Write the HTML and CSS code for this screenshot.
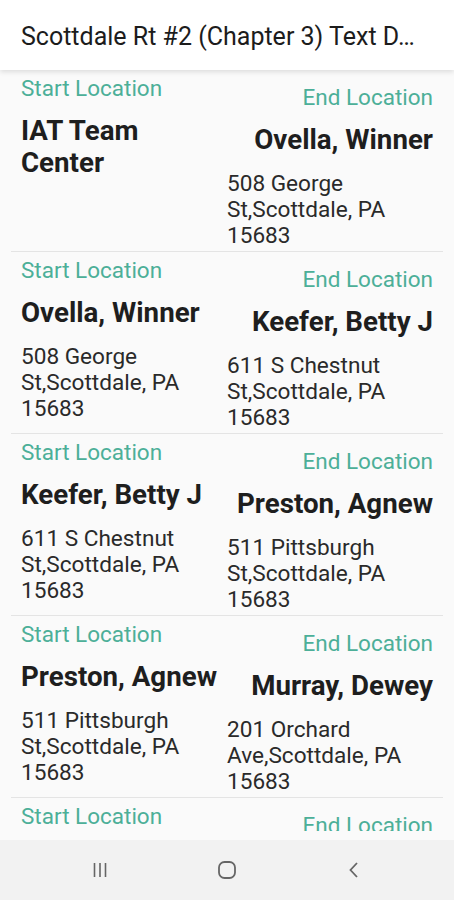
FILE: index.html
```html
<!DOCTYPE html>
<html>
<head>
    <meta name="viewport" content="width=device-width, initial-scale=1.0, user-scalable=no">
    <title>Scottdale Rt #2 (Chapter 3) Text Directions</title>
    <link rel="stylesheet" href="styles.css">
</head>

<body>
    <div class="app-bar">
        <p class="app-title">Scottdale Rt #2 (Chapter 3) Text D&hellip;</p>
    </div>

    <div class="stops-list">
        <div class="stop-row">
            <div class="stop-start">
                <p class="stop-label">Start Location</p>
                <p class="stop-name">IAT Team Center</p>
            </div>
            <div class="stop-end">
                <p class="stop-label">End Location</p>
                <p class="stop-name">Ovella, Winner</p>
                <p class="stop-address">508 George St,Scottdale, PA 15683</p>
            </div>
        </div>

        <div class="stop-row">
            <div class="stop-start">
                <p class="stop-label">Start Location</p>
                <p class="stop-name">Ovella, Winner</p>
                <p class="stop-address">508 George St,Scottdale, PA 15683</p>
            </div>
            <div class="stop-end">
                <p class="stop-label">End Location</p>
                <p class="stop-name">Keefer, Betty J</p>
                <p class="stop-address">611 S Chestnut St,Scottdale, PA 15683</p>
            </div>
        </div>

        <div class="stop-row">
            <div class="stop-start">
                <p class="stop-label">Start Location</p>
                <p class="stop-name">Keefer, Betty J</p>
                <p class="stop-address">611 S Chestnut St,Scottdale, PA 15683</p>
            </div>
            <div class="stop-end">
                <p class="stop-label">End Location</p>
                <p class="stop-name">Preston, Agnew</p>
                <p class="stop-address">511 Pittsburgh St,Scottdale, PA 15683</p>
            </div>
        </div>

        <div class="stop-row">
            <div class="stop-start">
                <p class="stop-label">Start Location</p>
                <p class="stop-name">Preston, Agnew</p>
                <p class="stop-address">511 Pittsburgh St,Scottdale, PA 15683</p>
            </div>
            <div class="stop-end">
                <p class="stop-label">End Location</p>
                <p class="stop-name">Murray, Dewey</p>
                <p class="stop-address">201 Orchard Ave,Scottdale, PA 15683</p>
            </div>
        </div>

        <div class="stop-row">
            <div class="stop-start">
                <p class="stop-label">Start Location</p>
                <p class="stop-name">Murray, Dewey</p>
                <p class="stop-address">201 Orchard Ave,Scottdale, PA 15683</p>
            </div>
            <div class="stop-end">
                <p class="stop-label">End Location</p>
                <p class="stop-name">Next Stop</p>
                <p class="stop-address">Scottdale, PA 15683</p>
            </div>
        </div>
    </div>

    <div class="nav-bar">
        <svg class="nav-icon" width="24" height="24" viewBox="0 0 24 24">
            <path d="M6.5 5v14M12 5v14M17.5 5v14" stroke="#666" stroke-width="1.6" fill="none"/>
        </svg>
        <svg class="nav-icon" width="24" height="24" viewBox="0 0 24 24">
            <rect x="4" y="4" width="16" height="16" rx="5.5" stroke="#666" stroke-width="1.8" fill="none"/>
        </svg>
        <svg class="nav-icon" width="24" height="24" viewBox="0 0 24 24">
            <path d="M15 5l-6.5 7 6.5 7" stroke="#666" stroke-width="1.8" fill="none"/>
        </svg>
    </div>
</body>

</html>
```

FILE: styles.css
```css
html, body {
    margin: 0px;
    height: 100%;
}

body {
    font-family: Roboto, "Noto Sans", sans-serif;
    display: flex;
    flex-direction: column;
    background-color: #fafafa;
    overflow: hidden;
}

p {
    margin: 0px;
}

.app-bar {
    height: 70px;
    flex: 0 0 70px;
    background-color: #ffffff;
    box-shadow: 0px 2px 5px rgba(0, 0, 0, 0.12);
    display: flex;
    align-items: center;
    padding: 0px 21px;
    position: relative;
    z-index: 1;
}

.app-title {
    font-size: 25px;
    color: #1c1c1c;
    white-space: nowrap;
    margin-top: 2px;
}

.stops-list {
    flex: 1;
    overflow: hidden;
    margin-bottom: 9px;
}

.stop-row {
    display: grid;
    grid-template-columns: 1fr 1fr;
    margin: 0px 11px;
    padding: 0px 10px 2px 10px;
    border-bottom: 1px solid #e4e4e4;
}

.stop-start {
    padding-top: 4px;
}

.stop-end {
    padding-top: 13px;
}

.stop-label {
    font-size: 22.5px;
    line-height: 28px;
    color: #4caf98;
}

.stop-name {
    font-size: 27.7px;
    font-weight: 700;
    line-height: 32px;
    color: #1e1e1e;
    margin-top: 13px;
}

.stop-address {
    font-size: 22.6px;
    line-height: 26px;
    color: #2a2a2a;
    margin-top: 15px;
}

.stop-end .stop-label,
.stop-end .stop-name {
    text-align: right;
}

.nav-bar {
    flex: 0 0 60px;
    background-color: #f2f2f2;
    display: flex;
    justify-content: center;
    align-items: center;
    gap: 103px;
}

.nav-icon {
    display: block;
}
```
